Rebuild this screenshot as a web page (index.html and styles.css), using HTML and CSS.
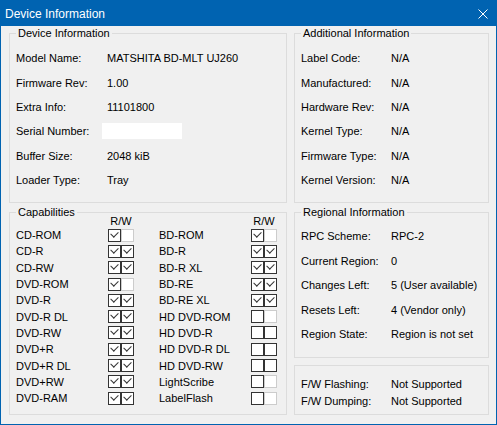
FILE: index.html
```html
<!DOCTYPE html>
<html>
<head>
<meta charset="utf-8">
<title>Device Information</title>
<link rel="stylesheet" href="styles.css">
</head>
<body>
<div class="window">
  <div class="titlebar">
    <span class="title">Device Information</span>
    <svg class="close" width="10" height="10" viewBox="0 0 10 10"><path d="M0.5 0.5L9.5 9.5M9.5 0.5L0.5 9.5" stroke="#fff" stroke-width="1" fill="none"/></svg>
  </div>
  <div class="content">
    <fieldset class="group g-device">
      <legend>Device Information</legend>
      <div class="info">
        <span>Model Name:</span><span>MATSHITA BD-MLT UJ260</span>
        <span>Firmware Rev:</span><span>1.00</span>
        <span>Extra Info:</span><span>11101800</span>
        <span>Serial Number:</span><span><span class="field"></span></span>
        <span>Buffer Size:</span><span>2048 kiB</span>
        <span>Loader Type:</span><span>Tray</span>
      </div>
    </fieldset>
    <fieldset class="group g-additional">
      <legend>Additional Information</legend>
      <div class="info">
        <span>Label Code:</span><span>N/A</span>
        <span>Manufactured:</span><span>N/A</span>
        <span>Hardware Rev:</span><span>N/A</span>
        <span>Kernel Type:</span><span>N/A</span>
        <span>Firmware Type:</span><span>N/A</span>
        <span>Kernel Version:</span><span>N/A</span>
      </div>
    </fieldset>
    <fieldset class="group g-caps">
      <legend>Capabilities</legend>
      <div class="caps">
        <span></span><span class="rw">R/W</span><span></span><span class="rw">R/W</span>
        <span>CD-ROM</span><span class="cbs"><i class="cb on"></i><i class="cb dis"></i></span>
        <span>BD-ROM</span><span class="cbs"><i class="cb on"></i><i class="cb dis"></i></span>
        <span>CD-R</span><span class="cbs"><i class="cb on"></i><i class="cb on"></i></span>
        <span>BD-R</span><span class="cbs"><i class="cb on"></i><i class="cb on"></i></span>
        <span>CD-RW</span><span class="cbs"><i class="cb on"></i><i class="cb on"></i></span>
        <span>BD-R XL</span><span class="cbs"><i class="cb on"></i><i class="cb on"></i></span>
        <span>DVD-ROM</span><span class="cbs"><i class="cb on"></i><i class="cb dis"></i></span>
        <span>BD-RE</span><span class="cbs"><i class="cb on"></i><i class="cb on"></i></span>
        <span>DVD-R</span><span class="cbs"><i class="cb on"></i><i class="cb on"></i></span>
        <span>BD-RE XL</span><span class="cbs"><i class="cb on"></i><i class="cb on"></i></span>
        <span>DVD-R DL</span><span class="cbs"><i class="cb on"></i><i class="cb on"></i></span>
        <span>HD DVD-ROM</span><span class="cbs"><i class="cb"></i><i class="cb dis"></i></span>
        <span>DVD-RW</span><span class="cbs"><i class="cb on"></i><i class="cb on"></i></span>
        <span>HD DVD-R</span><span class="cbs"><i class="cb"></i><i class="cb"></i></span>
        <span>DVD+R</span><span class="cbs"><i class="cb on"></i><i class="cb on"></i></span>
        <span>HD DVD-R DL</span><span class="cbs"><i class="cb"></i><i class="cb"></i></span>
        <span>DVD+R DL</span><span class="cbs"><i class="cb on"></i><i class="cb on"></i></span>
        <span>HD DVD-RW</span><span class="cbs"><i class="cb"></i><i class="cb"></i></span>
        <span>DVD+RW</span><span class="cbs"><i class="cb on"></i><i class="cb on"></i></span>
        <span>LightScribe</span><span class="cbs"><i class="cb"></i><i class="cb dis"></i></span>
        <span>DVD-RAM</span><span class="cbs"><i class="cb on"></i><i class="cb on"></i></span>
        <span>LabelFlash</span><span class="cbs"><i class="cb"></i><i class="cb dis"></i></span>
      </div>
    </fieldset>
    <div class="right-col">
      <fieldset class="group g-region">
        <legend>Regional Information</legend>
        <div class="info">
          <span>RPC Scheme:</span><span>RPC-2</span>
          <span>Current Region:</span><span>0</span>
          <span>Changes Left:</span><span>5 (User available)</span>
          <span>Resets Left:</span><span>4 (Vendor only)</span>
          <span>Region State:</span><span>Region is not set</span>
        </div>
      </fieldset>
      <div class="plain">
        <div class="fw">
          <span>F/W Flashing:</span><span>Not Supported</span>
          <span>F/W Dumping:</span><span>Not Supported</span>
        </div>
      </div>
    </div>
  </div>
</div>
</body>
</html>
```

FILE: styles.css
```css
html, body {
  margin: 0;
  padding: 0;
  background: #f0f0f0;
}
body {
  font-family: "Liberation Sans", Arial, sans-serif;
  font-size: 11px;
  color: #000;
}
.window {
  width: 497px;
  height: 425px;
  box-sizing: border-box;
  border: 1px solid #0063b1;
  background: #f0f0f0;
  display: flex;
  flex-direction: column;
}
.titlebar {
  flex: none;
  height: 25px;
  background: #0063b1;
  color: #fff;
  display: flex;
  align-items: center;
  justify-content: space-between;
  padding: 0 8px 0 4px;
}
.title {
  font-size: 12px;
}
.close {
  display: block;
  width: 10px;
  height: 10px;
}
.content {
  display: grid;
  grid-template-columns: 278px 195px;
  grid-template-rows: 176px 209px;
  column-gap: 7px;
  row-gap: 3px;
  padding: 1px 7px 9px 8px;
}
.group {
  margin: 0;
  padding: 0;
  min-width: 0;
  box-sizing: border-box;
  border: 1px solid #dcdcdc;
}
.group legend {
  margin-left: 6px;
  padding: 0 2px;
  line-height: 13px;
  font-size: 11px;
}
.info {
  display: grid;
  grid-template-columns: 91px 1fr;
  grid-auto-rows: 24.4px;
  align-items: center;
  padding: 6px 6px 0;
}
.g-additional .info {
  grid-template-columns: 90px 1fr;
}
.field {
  display: block;
  width: 80px;
  height: 16px;
  background: #fff;
  margin-left: -5px;
}
.right-col {
  display: flex;
  flex-direction: column;
  gap: 7px;
}
.g-region {
  flex: 1;
}
.g-region .info {
  grid-template-columns: 90px 1fr;
  grid-auto-rows: 24.5px;
  padding-top: 5px;
}
.plain {
  flex: none;
  height: 50px;
  box-sizing: border-box;
  border: 1px solid #dcdcdc;
  padding: 9px 6px 0;
}
.fw {
  display: grid;
  grid-template-columns: 90px 1fr;
  grid-auto-rows: 17px;
  align-items: center;
}
.caps {
  display: grid;
  grid-template-columns: 92px 51px 92px 26px;
  grid-template-rows: 12px repeat(11, 16.3px);
  align-items: center;
  margin-top: -4px;
  padding-left: 6px;
}
.rw {
  width: 26px;
  text-align: center;
  line-height: 12px;
}
.cbs {
  display: flex;
}
.cb {
  display: block;
  width: 13px;
  height: 13px;
  box-sizing: border-box;
  border: 1px solid #333;
  background: #fff;
  position: relative;
}
.cb.dis {
  border-color: #cccccc;
}
.cb.on::after {
  content: "";
  position: absolute;
  left: 2px;
  top: 1px;
  width: 6px;
  height: 4px;
  border-left: 1px solid #333;
  border-bottom: 1px solid #333;
  transform: rotate(-45deg);
}
```
